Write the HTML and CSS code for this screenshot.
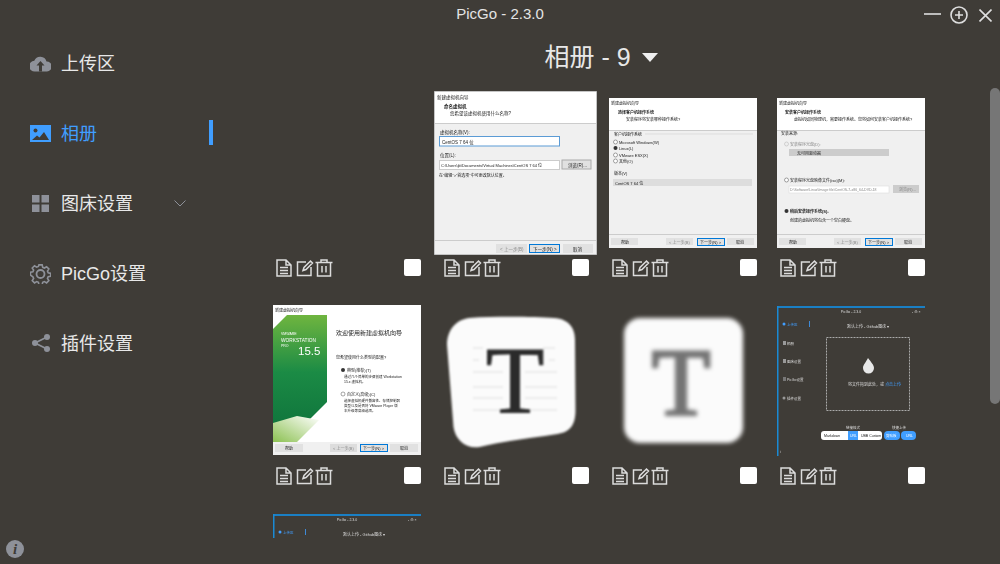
FILE: index.html
```html
<!DOCTYPE html>
<html lang="zh-CN">
<head>
<meta charset="utf-8">
<title>PicGo</title>
<link rel="stylesheet" href="styles.css">
</head>
<body>
<svg class="defs" width="0" height="0" aria-hidden="true">
  <symbol id="i-doc" viewBox="0 0 16 18">
    <path class="ln" d="M1 1h9l5 5v11H1zM10 1v5h5M4 8.500h8M4 11.500h8M4 14.500h8"/>
  </symbol>
  <symbol id="i-edit" viewBox="0 0 18 18">
    <path class="ln" d="M10 3H1.500v13.500H15V8M7 11.500l1-3L14.500 2l2 2L10 10.500z"/>
  </symbol>
  <symbol id="i-trash" viewBox="0 0 18 18">
    <path class="ln" d="M0.500 3.500h17M6 3.500V1h6v2.500M2.500 3.500V17h13V3.500M7 7v6.500M11 7v6.500"/>
  </symbol>
</svg>

<div class="app">
  <header class="titlebar">
    <span class="title">PicGo - 2.3.0</span>
    <div class="winctl">
      <svg class="ctl-min" viewBox="0 0 17 18"><path class="wl" d="M0 8h17"/></svg>
      <svg class="ctl-plus" viewBox="0 0 18 18"><circle class="wl" cx="9" cy="9" r="8"/><path class="wl" d="M5 9h8M9 5v8"/></svg>
      <svg class="ctl-close" viewBox="0 0 13 13"><path class="wl" d="M0.500 0.500l12 12M12.500 0.500l-12 12"/></svg>
    </div>
  </header>
  <div class="body">
    <nav class="sidebar">
      <a class="item">
        <svg class="ico" viewBox="0 0 21 16"><path class="gf" d="M16.500 6A6.500 6.500 0 0 0 4.300 5.200 5.300 5.300 0 0 0 5 16h12a4.900 4.900 0 0 0-.5-10z"/><path class="cut" d="M10.500 5.500l4 4.500h-2.500v6h-3v-6H6.500z"/></svg>
        <span>上传区</span>
      </a>
      <a class="item active">
        <svg class="ico" viewBox="0 0 21 17"><rect class="bf" width="21" height="17"/><circle class="cut" cx="5.500" cy="5.500" r="2"/><path class="cut" d="M2 15l5-4.500 2.500 2L14 7l5 8z"/></svg>
        <span>相册</span>
      </a>
      <a class="item">
        <svg class="ico" viewBox="0 0 21 17"><path class="gf" d="M2 0h7.500v7.500H2zM11.500 0H19v7.500h-7.500zM2 9.500h7.500V17H2zM11.500 9.500H19V17h-7.500z"/></svg>
        <span>图床设置</span>
        <svg class="chev" viewBox="0 0 12 7"><path d="M0.500 0.500L6 6l5.500-5.500"/></svg>
      </a>
      <a class="item">
        <svg class="ico ico-gear" viewBox="0 0 21 21"><path class="gs" d="M8.700 1h3.600l.6 2.700 1.900.8 2.400-1.500 2.500 2.500-1.500 2.400.8 1.900 2.700.6v3.200l-2.700.6-.8 1.900 1.500 2.400-2.500 2.500-2.400-1.500-1.900.8-.6 2.700H8.700l-.6-2.700-1.900-.8-2.400 1.500-2.500-2.500 1.500-2.400-.8-1.900L-.7 12.400V9.200l2.700-.6.8-1.900L1.300 4.500l2.500-2.500 2.400 1.500 1.900-.8z" transform="translate(1.100 1) scale(.9)"/><circle class="gs" cx="10.500" cy="11" r="4"/></svg>
        <span>PicGo设置</span>
      </a>
      <a class="item">
        <svg class="ico ico-share" viewBox="0 0 18 18"><circle class="gf" cx="3" cy="9" r="3"/><circle class="gf" cx="15" cy="3" r="3"/><circle class="gf" cx="15" cy="15" r="3"/><path class="gs" d="M3 9l12-6M3 9l12 6"/></svg>
        <span>插件设置</span>
      </a>
      <div class="info"><i>i</i></div>
    </nav>

    <main class="main">
      <h1 class="heading"><span>相册 - 9</span><b class="caret"></b></h1>
      <div class="gallery">
        <section class="tile">
          <div class="pic"></div>
          <div class="tools"><div class="acts"><svg class="a-doc"><use href="#i-doc"/></svg><svg class="a-edit"><use href="#i-edit"/></svg><svg class="a-trash"><use href="#i-trash"/></svg></div><span class="check"></span></div>
        </section>

        <section class="tile">
          <div class="pic">
            <svg class="thumb wide" viewBox="0 0 163 164">
              <rect width="163" height="164" fill="#f0f0f0" stroke="#999"/>
              <rect x="1" y="1" width="161" height="31" fill="#fff"/>
              <path d="M1 32.500h161" stroke="#ccc"/>
              <text class="t45 dk" x="3" y="8">新建虚拟机向导</text>
              <text class="t45 dk b" x="10" y="17">命名虚拟机</text>
              <text class="t45 dk" x="16" y="24">您希望该虚拟机使用什么名称?</text>
              <text class="t45 dk" x="6" y="43">虚拟机名称(V):</text>
              <rect x="5.500" y="45.500" width="120" height="9.500" fill="#fff" stroke="#5b9bd5"/>
              <text class="t45 dk" x="8" y="52.500">CentOS 7 64 位</text>
              <text class="t45 dk" x="6" y="66">位置(L):</text>
              <rect x="5.500" y="69.500" width="120" height="9" fill="#fff" stroke="#ccc"/>
              <text class="t4 dk" x="7" y="75.500">C:\Users\jb\Documents\Virtual Machines\CentOS 7 64 位</text>
              <rect x="128" y="69" width="29" height="9" fill="#e1e1e1" stroke="#aaa"/>
              <text class="t45 dk" x="134" y="75.500">浏览(R)...</text>
              <text class="t4 dk" x="5" y="86">在“编辑”&gt;“首选项”中可更改默认位置。</text>
              <path d="M1 149.500h161" stroke="#ccc"/>
              <rect x="62" y="153" width="31" height="9" fill="#e1e1e1"/>
              <text class="t45 md" x="66" y="159.500">&lt; 上一步(B)</text>
              <rect x="95.500" y="153.500" width="30" height="8" fill="#e1e1e1" stroke="#0078d7"/>
              <text class="t45 dk" x="99" y="159.500">下一步(N) &gt;</text>
              <rect x="129" y="153" width="30" height="9" fill="#e1e1e1"/>
              <text class="t45 dk" x="139" y="159.500">取消</text>
            </svg>
          </div>
          <div class="tools"><div class="acts"><svg class="a-doc"><use href="#i-doc"/></svg><svg class="a-edit"><use href="#i-edit"/></svg><svg class="a-trash"><use href="#i-trash"/></svg></div><span class="check"></span></div>
        </section>

        <section class="tile">
          <div class="pic">
            <svg class="thumb" viewBox="0 0 148 150">
              <rect width="148" height="150" fill="#f0f0f0"/>
              <rect width="148" height="32" fill="#fff"/>
              <path d="M0 32.500h148" stroke="#ccc"/>
              <text class="t4 dk" x="2" y="7">新建虚拟机向导</text>
              <text class="t4 dk b" x="9" y="16">选择客户机操作系统</text>
              <text class="t4 dk" x="17" y="23">安装程序将安装哪种操作系统?</text>
              <text class="t4 dk" x="5" y="37.500">客户机操作系统</text>
              <path d="M36 36h108" stroke="#ddd"/>
              <circle cx="6.500" cy="44" r="2" fill="#fff" stroke="#666" stroke-width=".6"/>
              <text class="t4 dk" x="10" y="46">Microsoft Windows(W)</text>
              <circle cx="6.500" cy="50" r="2" fill="#333"/>
              <text class="t4 dk" x="10" y="52">Linux(L)</text>
              <circle cx="6.500" cy="57" r="2" fill="#fff" stroke="#666" stroke-width=".6"/>
              <text class="t4 dk" x="10" y="59">VMware ESX(X)</text>
              <circle cx="6.500" cy="63" r="2" fill="#fff" stroke="#666" stroke-width=".6"/>
              <text class="t4 dk" x="10" y="65">其他(O)</text>
              <text class="t4 dk" x="5" y="77">版本(V)</text>
              <rect x="4" y="81" width="139" height="7" fill="#ddd"/>
              <text class="t4 dk" x="6" y="86.500">CentOS 7 64 位</text>
              <path d="M0 136.500h148" stroke="#ccc"/>
              <rect x="2" y="140" width="27" height="7" fill="#e1e1e1"/>
              <text class="t4 dk" x="12" y="145.500">帮助</text>
              <rect x="57" y="140" width="27" height="7" fill="#e1e1e1"/>
              <text class="t4 md" x="60" y="145.500">&lt; 上一步(B)</text>
              <rect x="88.500" y="140.500" width="27" height="7" fill="#e1e1e1" stroke="#0078d7"/>
              <text class="t4 dk" x="91" y="145.500">下一步(N) &gt;</text>
              <rect x="118" y="140" width="27" height="7" fill="#e1e1e1"/>
              <text class="t4 dk" x="127" y="145.500">取消</text>
            </svg>
          </div>
          <div class="tools"><div class="acts"><svg class="a-doc"><use href="#i-doc"/></svg><svg class="a-edit"><use href="#i-edit"/></svg><svg class="a-trash"><use href="#i-trash"/></svg></div><span class="check"></span></div>
        </section>

        <section class="tile">
          <div class="pic">
            <svg class="thumb" viewBox="0 0 148 150">
              <rect width="148" height="150" fill="#f0f0f0"/>
              <rect width="148" height="32" fill="#fff"/>
              <path d="M0 32.500h148" stroke="#ccc"/>
              <text class="t4 dk" x="2" y="7">新建虚拟机向导</text>
              <text class="t4 dk b" x="8" y="16">安装客户机操作系统</text>
              <text class="t4 dk" x="17" y="23">虚拟机如同物理机，需要操作系统。您将如何安装客户机操作系统?</text>
              <text class="t4 dk" x="4" y="37">安装来源:</text>
              <circle cx="9.500" cy="46" r="2" fill="#eee" stroke="#bbb" stroke-width=".6"/>
              <text class="t4 md" x="13" y="48">安装程序光盘(D):</text>
              <rect x="12" y="51" width="100" height="7" fill="#ccc"/>
              <text class="t4 dk" x="20" y="56.500">无可用驱动器</text>
              <circle cx="9.500" cy="82" r="2" fill="#fff" stroke="#666" stroke-width=".6"/>
              <text class="t4 dk" x="13" y="83.500">安装程序光盘映像文件(iso)(M):</text>
              <rect x="12" y="88" width="100" height="7" fill="#fff" stroke="#ddd" stroke-width=".6"/>
              <text class="t3 md" x="13" y="93">D:\Software\Linux\Image file\CentOS-7-x86_64-DVD-18</text>
              <rect x="116" y="87" width="26" height="8" fill="#ccc"/>
              <text class="t4 md" x="122" y="93">浏览(R)...</text>
              <circle cx="9.500" cy="113" r="2" fill="#333"/>
              <text class="t4 dk b" x="13" y="115">稍后安装操作系统(S)。</text>
              <text class="t4 dk" x="13" y="124">创建的虚拟机将包含一个空白硬盘。</text>
              <path d="M0 136.500h148" stroke="#ccc"/>
              <rect x="2" y="140" width="27" height="7" fill="#e1e1e1"/>
              <text class="t4 dk" x="12" y="145.500">帮助</text>
              <rect x="57" y="140" width="27" height="7" fill="#e1e1e1"/>
              <text class="t4 md" x="60" y="145.500">&lt; 上一步(B)</text>
              <rect x="88.500" y="140.500" width="27" height="7" fill="#e1e1e1" stroke="#0078d7"/>
              <text class="t4 dk" x="91" y="145.500">下一步(N) &gt;</text>
              <rect x="118" y="140" width="27" height="7" fill="#e1e1e1"/>
              <text class="t4 dk" x="127" y="145.500">取消</text>
            </svg>
          </div>
          <div class="tools"><div class="acts"><svg class="a-doc"><use href="#i-doc"/></svg><svg class="a-edit"><use href="#i-edit"/></svg><svg class="a-trash"><use href="#i-trash"/></svg></div><span class="check"></span></div>
        </section>

        <section class="tile">
          <div class="pic up">
            <svg class="thumb" viewBox="0 0 148 150">
              <defs>
                <linearGradient id="gr" x1="0" y1="0" x2="0" y2="1"><stop offset="0" stop-color="#6fb53f"/><stop offset=".45" stop-color="#1b8b45"/><stop offset="1" stop-color="#0d6f3a"/></linearGradient>
                <linearGradient id="gl" x1="0" y1="1" x2="1" y2="0"><stop offset="0" stop-color="#8cc152"/><stop offset="1" stop-color="#fff"/></linearGradient>
              </defs>
              <rect width="148" height="150" fill="#fff"/>
              <path d="M0 24L14 10h40v87L14 137H0z" fill="url(#gr)"/>
              <path d="M0 137V118l24-7 22 4-22 22z" fill="url(#gl)"/>
              <text class="t4 dk" x="2" y="7">新建虚拟机向导</text>
              <text class="t3 wh" x="8" y="30">VMWARE</text>
              <text class="t48 wh" x="8" y="37">WORKSTATION</text>
              <text class="t3 wh" x="8" y="42">PRO</text>
              <text class="t15 wh" x="25" y="50">15.5</text>
              <text class="t6 dk" x="63" y="30">欢迎使用新建虚拟机向导</text>
              <text class="t4 dk" x="63" y="54">您希望使用什么类型的配置?</text>
              <circle cx="70" cy="65" r="2" fill="#333"/>
              <text class="t4 dk" x="74" y="67">典型(推荐)(T)</text>
              <text class="t3 dk" x="71" y="73">通过几个简单的步骤创建 Workstation</text>
              <text class="t3 dk" x="71" y="78">15.x 虚拟机。</text>
              <circle cx="70" cy="89" r="2" fill="#fff" stroke="#666" stroke-width=".6"/>
              <text class="t4 dk" x="74" y="91">自定义(高级)(C)</text>
              <text class="t3 dk" x="71" y="97">选择虚拟机硬件兼容性、存储控制器</text>
              <text class="t3 dk" x="71" y="102">类型以及是否将 VMware Player 版</text>
              <text class="t3 dk" x="71" y="107">本升级等高级选项。</text>
              <rect y="137" width="148" height="13" fill="#f0f0f0"/>
              <rect x="2" y="139" width="28" height="8" fill="#e1e1e1"/>
              <text class="t4 dk" x="12" y="145">帮助</text>
              <rect x="57" y="139" width="27" height="8" fill="#ddd"/>
              <text class="t4 md" x="60" y="145">&lt; 上一步(B)</text>
              <rect x="87.500" y="139.500" width="27" height="7" fill="#e1e1e1" stroke="#0078d7"/>
              <text class="t4 dk" x="90" y="145">下一步(N) &gt;</text>
              <rect x="117" y="139" width="28" height="8" fill="#e1e1e1"/>
              <text class="t4 dk" x="127" y="145">取消</text>
            </svg>
          </div>
          <div class="tools"><div class="acts"><svg class="a-doc"><use href="#i-doc"/></svg><svg class="a-edit"><use href="#i-edit"/></svg><svg class="a-trash"><use href="#i-trash"/></svg></div><span class="check"></span></div>
        </section>

        <section class="tile">
          <div class="pic up">
            <svg class="thumb soft" viewBox="0 0 148 150">
              <path d="M28 13C60 11 95 12 113 13c15 1 21 10 21 22l.5 70c0 16-6 22-18 24-25 4-55 7-78 13-14 2-24-7-26-20L6 40c0-14 8-25 22-27z" fill="#fbfbfb"/>
              <g stroke="#dcdcdc" stroke-width="1.200">
                <path d="M32 43h10M102 43h12M32 55h6M108 55h6M32 67h30M84 67h32M32 82h30M84 82h32M32 93h30M84 93h32M32 105h30M84 105h32"/>
              </g>
              <text class="bigT" x="74" y="108" text-anchor="middle">T</text>
            </svg>
          </div>
          <div class="tools"><div class="acts"><svg class="a-doc"><use href="#i-doc"/></svg><svg class="a-edit"><use href="#i-edit"/></svg><svg class="a-trash"><use href="#i-trash"/></svg></div><span class="check"></span></div>
        </section>

        <section class="tile">
          <div class="pic up">
            <svg class="thumb blurry" viewBox="0 0 148 150">
              <rect x="15" y="13" width="119" height="125" rx="16" fill="#fbfbfb"/>
              <text class="bigT grayT" x="72" y="110" text-anchor="middle">T</text>
            </svg>
          </div>
          <div class="tools"><div class="acts"><svg class="a-doc"><use href="#i-doc"/></svg><svg class="a-edit"><use href="#i-edit"/></svg><svg class="a-trash"><use href="#i-trash"/></svg></div><span class="check"></span></div>
        </section>

        <section class="tile">
          <div class="pic">
            <svg class="thumb" viewBox="0 0 148 150">
              <rect x="0" y="0" width="148" height="2" fill="#1a7fc4"/>
              <rect x="0" y="0" width="1.500" height="150" fill="#1a8ad4"/>
              <text class="t3 lt" x="74" y="7" text-anchor="middle">PicGo - 2.3.0</text>
              <text class="t3 lt" x="135" y="7">- ⊕ ×</text>
              <circle cx="7" cy="18" r="1.500" fill="#409eff"/>
              <text class="t3 bl" x="10" y="20">上传区</text>
              <rect x="32" y="15" width="0.800" height="6" fill="#409eff"/>
              <rect x="6" y="35" width="3" height="4" fill="#999"/>
              <text class="t3 lt" x="10" y="39">相册</text>
              <rect x="6" y="53" width="3" height="4" fill="#999"/>
              <text class="t3 lt" x="10" y="57">图床设置</text>
              <rect x="6" y="71" width="3" height="4" fill="#777"/>
              <text class="t3 lt" x="10" y="75">PicGo设置</text>
              <circle cx="7" cy="92" r="1.500" fill="#999"/>
              <text class="t3 lt" x="10" y="94">插件设置</text>
              <text class="t4 lt" x="70" y="22">默认上传 - Github图床 ▾</text>
              <rect x="49.500" y="31.500" width="83" height="73" fill="none" stroke="#aaa" stroke-width="1" stroke-dasharray="2 1"/>
              <path d="M91 52c3 4 6 7 6 10a5.500 5.500 0 0 1-11 0c0-3 3-6 5-10z" fill="#e8e8e8"/>
              <text class="t4 lt" x="71" y="80">将文件拖到此处，或 <tspan fill="#409eff">点击上传</tspan></text>
              <text class="t3 lt" x="69" y="123">链接格式</text>
              <text class="t3 lt" x="115" y="123">快捷上传</text>
              <rect x="44" y="125" width="61" height="9" rx="3" fill="#fff"/>
              <rect x="71" y="125" width="10" height="9" fill="#409eff"/>
              <text class="t3 dk" x="47" y="131">Markdown</text>
              <text class="t3 wh" x="73" y="131">URL</text>
              <text class="t3 dk" x="84" y="131">UBB Custom</text>
              <rect x="107" y="125" width="16" height="9" rx="4" fill="#409eff"/>
              <rect x="124" y="125" width="15" height="9" rx="4" fill="#409eff"/>
              <text class="t3 wh" x="109" y="131">剪贴板</text>
              <text class="t3 wh" x="129" y="131">URL</text>
              <text class="t3 lt" x="3" y="147">i</text>
            </svg>
          </div>
          <div class="tools"><div class="acts"><svg class="a-doc"><use href="#i-doc"/></svg><svg class="a-edit"><use href="#i-edit"/></svg><svg class="a-trash"><use href="#i-trash"/></svg></div><span class="check"></span></div>
        </section>

        <section class="tile">
          <div class="pic">
            <svg class="thumb" viewBox="0 0 148 150">
              <rect x="0" y="0" width="148" height="2" fill="#1a7fc4"/>
              <rect x="0" y="0" width="1.500" height="150" fill="#1a8ad4"/>
              <text class="t3 lt" x="74" y="7" text-anchor="middle">PicGo - 2.3.0</text>
              <text class="t3 lt" x="135" y="7">- ⊕ ×</text>
              <circle cx="7" cy="18" r="1.500" fill="#409eff"/>
              <text class="t3 bl" x="10" y="20">上传区</text>
              <rect x="32" y="15" width="0.800" height="6" fill="#409eff"/>
              <text class="t4 lt" x="70" y="22">默认上传 - Github图床 ▾</text>
            </svg>
          </div>
        </section>
      </div>
    </main>
  </div>
  <div class="scrollbar"></div>
</div>
</body>
</html>
```

FILE: styles.css
```css
* { box-sizing: border-box; }
html, body { margin: 0; height: 100%; overflow: hidden; }
body {
  background: #3f3c37;
  color: #e8e8e8;
  font-family: "Liberation Sans", "Noto Sans CJK SC", sans-serif;
}
.defs { position: absolute; }
.app { position: relative; width: 1000px; height: 564px; display: flex; flex-direction: column; }

/* title bar */
.titlebar { height: 28px; flex: none; display: flex; justify-content: center; padding-top: 5px; position: relative; }
.title { font-size: 15px; line-height: 17px; color: #e4e4e4; }
.winctl { position: absolute; right: 8px; top: 6px; display: flex; align-items: center; gap: 9px; }
.wl { fill: none; stroke: #dedede; stroke-width: 1.600; }
.ctl-min { width: 17px; height: 18px; }
.ctl-plus { width: 18px; height: 18px; margin-right: 2px; }
.ctl-close { width: 13px; height: 13px; }

/* layout */
.body { flex: 1; min-height: 0; display: flex; }
.sidebar { width: 213px; flex: none; display: flex; flex-direction: column; }
.main { flex: 1; min-width: 0; padding: 0 75px 0 60px; display: flex; flex-direction: column; }

/* menu */
.item { height: 70px; flex: none; display: flex; align-items: center; padding-left: 30px; font-size: 18px; line-height: 18px; color: #e8e8e8; position: relative; }
.item span { margin-left: 10px; margin-top: 2px; }
.item.active { color: #409eff; }
.item.active::after { content: ""; position: absolute; right: 0; top: 22px; width: 4px; height: 25px; background: #409eff; }
.ico { width: 21px; height: 17px; flex: none; }
.ico-gear { height: 21px; }
.ico-share { width: 18px; height: 18px; margin: 0 1.500px; }
.gf { fill: #8e9199; }
.bf { fill: #409eff; }
.gs { fill: none; stroke: #8e9199; stroke-width: 1.800; }
.cut { fill: #3f3c37; }
.chev { position: absolute; left: 174px; top: 32px; width: 12px; height: 7px; fill: none; stroke: #8e9199; stroke-width: 1; }
.info { margin-top: auto; margin-left: 6px; margin-bottom: 6px; width: 18px; height: 18px; border-radius: 50%; background: #8e9199; color: #3f3c37; display: flex; align-items: center; justify-content: center; font: italic 700 15px/18px "Liberation Serif", serif; }

/* heading */
.heading { margin: 0; height: 63px; flex: none; padding: 11px 0 0 4px; display: flex; justify-content: center; align-items: flex-start; gap: 11px; font-size: 25px; line-height: 36px; font-weight: 400; color: #e8e8e8; }
.caret { width: 0; height: 0; margin-top: 14px; border-left: 8px solid transparent; border-right: 8px solid transparent; border-top: 9px solid #efefef; }

/* gallery: the top padding leaves room for the taller picture in the first row */
.gallery { height: 447px; padding-top: 7px; margin: 0 -8px 0; padding-left: 8px; padding-right: 8px; overflow: hidden; display: grid; grid-template-columns: repeat(4, 148px); grid-auto-rows: 208px; column-gap: 20px; align-content: start; }
.tile { display: flex; flex-direction: column; }
.pic { height: 150px; flex: none; display: flex; justify-content: center; align-items: center; }
.pic.up { position: relative; top: -1px; }
.thumb { width: 148px; height: 150px; flex: none; filter: blur(.6px); overflow: hidden; }
.thumb.wide { width: 163px; height: 164px; margin: 0 -8px; }
.thumb.soft { filter: blur(1px); overflow: visible; }
.thumb.blurry { filter: blur(2.200px); overflow: visible; }
.tools { margin-top: 11px; height: 18px; display: flex; justify-content: space-between; align-items: flex-start; }
.acts { display: flex; margin-left: 3px; filter: blur(.25px); }
.a-doc { width: 16px; height: 18px; margin-right: 4px; }
.a-edit { width: 18px; height: 18px; margin-right: 1px; }
.a-trash { width: 18px; height: 18px; }
.ln { fill: none; stroke: #dcdcdc; stroke-width: 1.500; }
.check { width: 17px; height: 17px; background: #fff; border-radius: 2px; }

/* text in thumbnails */
.thumb text { font-family: "Liberation Sans", "Noto Sans CJK SC", sans-serif; }
.t3 { font-size: 3.500px; }
.t4 { font-size: 4px; }
.t45 { font-size: 4.500px; }
.t48 { font-size: 4.800px; }
.t6 { font-size: 6px; }
.t15 { font-size: 11.500px; }
.dk { fill: #222; }
.md { fill: #888; }
.lt { fill: #ddd; }
.wh { fill: #fff; }
.bl { fill: #409eff; }
.b { font-weight: 700; }
.thumb .bigT { font-family: "Liberation Serif", serif; font-size: 96px; fill: #2b2b2b; stroke: #2b2b2b; stroke-width: 1px; }
.thumb .grayT { fill: #747474; stroke: #747474; stroke-width: 3px; }

/* overlay scrollbar */
.scrollbar { position: absolute; right: 0; top: 88px; width: 10px; height: 316px; border-radius: 5px; background: #767676; }
```
